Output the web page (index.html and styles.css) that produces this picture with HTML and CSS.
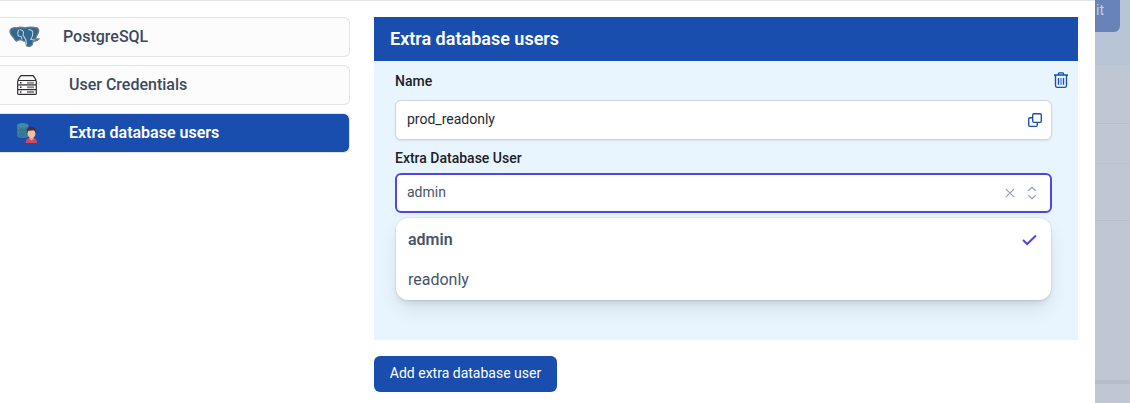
FILE: index.html
```html
<!DOCTYPE html>
<html lang="en">
<head>
<meta charset="utf-8">
<title>Extra database users</title>
<link rel="stylesheet" href="styles.css">
</head>
<body>
<div class="screen">
  <main class="drawer">
    <nav class="steps">
      <a class="step">
        <svg class="elephant" viewBox="0 0 32 22">
          <path d="M1 5C1 2 4 1 8 1.500C11 .5 14 .7 16 1.500C20 .5 24 .8 26 1C31 1 32 4 29 9L27 13L31 13Q29 16 25 15L24 19Q22 22 18 20L17 15Q15 16 13 14L10 14Q7 17 5 12Q1 8 1 5Z" fill="#306891" stroke="#777b7e" stroke-width="1.300"/>
          <path d="M10 3.500Q8 8 10 10Q14 10 13 13.500M11 3.500Q14 3 15 6L14.500 9L17.500 14L18 19M20 3.500Q24 3 24.500 6Q25 10 22.500 13.500L27 14" fill="none" stroke="#c3d0da" stroke-width="1.100"/>
        </svg>
        <span>PostgreSQL</span>
      </a>
      <a class="step nested">
        <svg class="small-icon" viewBox="0 0 20 20" fill="none" stroke="#302d30" stroke-width="1.2">
          <path d="M1 5L3 1.6Q3.5.7 5 .7H15Q16.500.7 17 1.6L19 5" fill="#f8f8f8"/>
          <rect x=".7" y="5.500" width="18.600" height="4.500" rx=".8" fill="#fff"/>
          <rect x=".7" y="10" width="18.600" height="4.700" rx=".8" fill="#fff"/>
          <rect x=".7" y="14.700" width="18.600" height="4.600" rx=".8" fill="#fff"/>
          <path d="M3 7.700H4.500M3 12.300H4.500M3 17H4.500" stroke-width="1.400"/>
          <path d="M10 7.700H17M10 12.300H17M10 17H17" stroke="#8f8c8f" stroke-width="2"/>
        </svg>
        <span>User Credentials</span>
      </a>
      <a class="step nested active">
        <svg class="small-icon" viewBox="0 0 20 20">
          <path d="M0 2.500V13Q1 15 6 15T11.500 13V2.500" fill="#347b9d"/>
          <ellipse cx="5.750" cy="2.500" rx="5.750" ry="2.500" fill="#4389a5"/>
          <path d="M0 6Q5 9 11.500 6M0 10.500Q5 13 11.500 10.500" fill="none" stroke="#2c7092" stroke-width=".7"/>
          <path d="M1 5.500H2M1 10H2" stroke="#7f9f6b" stroke-width=".8"/>
          <path d="M8.500 20Q9 15.500 12 15H16.500Q20 15.500 20 20Z" fill="#cf4961"/>
          <path d="M12.500 13H16.500V16L14.500 17.500L12.500 16Z" fill="#e1a68f"/>
          <ellipse cx="14.500" cy="10.500" rx="4" ry="4.700" fill="#f1bda5"/>
          <path d="M9.800 10Q8.600 4 14 3.500Q20 3.500 19.200 10H18.500Q18 7.500 16.500 7.200Q13 8 10.800 7.500L10.300 10Z" fill="#482f37"/>
        </svg>
        <span>Extra database users</span>
      </a>
    </nav>
    <section class="content">
      <div class="panel">
        <h2 class="panel-title">Extra database users</h2>
        <div class="panel-body">
          <div class="fields">
            <label class="label">Name</label>
            <div class="input">
              <span>prod_readonly</span>
              <svg class="copy" viewBox="0 0 16 16" fill="none" stroke="#194eae" stroke-width="1.350">
                <rect x="5.700" y="1.700" width="8.600" height="8.600" rx="1.200"/>
                <path d="M5 5.700H2.900Q1.700 5.700 1.700 6.900V13.100Q1.700 14.300 2.900 14.300H9.100Q10.300 14.300 10.300 13.100V11"/>
              </svg>
            </div>
            <label class="label second">Extra Database User</label>
            <div class="input select">
              <span>admin</span>
              <span class="select-icons">
                <svg width="10" height="10" viewBox="0 0 10 10"><path d="M.8.8L9.200 9.200M9.200.8L.8 9.200"/></svg>
                <svg width="10" height="14" viewBox="0 0 10 14"><path d="M1.300 4.700L5 1.300L8.700 4.700M1.300 9.300L5 12.700L8.700 9.300"/></svg>
              </span>
            </div>
            <div class="menu">
              <div class="option chosen"><span>admin</span>
                <svg width="15" height="12" viewBox="0 0 15 12" fill="none" stroke="#4f46e5" stroke-width="2"><path d="M1 6L5.200 10L14 1.500"/></svg>
              </div>
              <div class="option"><span>readonly</span></div>
            </div>
          </div>
          <svg class="trash" viewBox="0 0 14 16" fill="none" stroke="#194eae" stroke-width="1.350">
            <path d="M0 3H14M4 3L5 .8H9L10 3M1.500 3.500V13.500Q1.500 15.300 3 15.300H11Q12.500 15.300 12.500 13.500V3.500M4.500 6V12.700M9.500 6V12.700"/>
            <path d="M7 6V12.700" stroke="#7e9fd2" stroke-width="1.800"/>
          </svg>
        </div>
      </div>
      <button class="add">Add extra database user</button>
    </section>
  </main>
  <aside class="backdrop">
    <div class="band"><div class="edit">it</div></div>
    <div class="row r1"></div>
    <div class="row r2"></div>
    <div class="row r3"></div>
    <div class="row r4"></div>
  </aside>
</div>
</body>
</html>
```
FILE: styles.css
```css
* { box-sizing: border-box; }
body { margin: 0; font-family: Roboto, sans-serif; }
.screen { display: flex; width: 1130px; height: 403px; overflow: hidden; background: #bfc6d4; }
.drawer { display: flex; gap: 24px; width: 1095px; padding: 16px 17px 0 0; border-top: 1px solid #e2e4ea; background: #fff; }
.steps { display: flex; flex-direction: column; gap: 8px; width: 350px; }
.step {
  display: flex; align-items: center; gap: 23px; height: 40px; padding: 0 0 0 9px;
  border: 1px solid #e3e4e6; border-left: 0; border-radius: 0 6px 6px 0;
  background: #fcfcfc; color: #3d4a5c; font-size: 16px; line-height: 24px; font-weight: 500;
}
.nested { gap: 32px; padding-left: 17px; }
.active { background: #194eae; background-clip: padding-box; color: #fff; font-weight: 600; }
.elephant { width: 31px; height: 22px; }
.small-icon { width: 20px; height: 20px; }
.content { width: 704px; }
.panel { height: 323px; background: #e8f5fe; }
.panel-title { height: 44px; margin: 0; padding: 0 16px; background: #194eae; color: #fff; font-size: 18px; line-height: 43px; font-weight: 600; }
.panel-body { display: flex; padding: 10px 10px 0 21px; }
.fields { width: 657px; }
.label { display: block; color: #1c2027; font-size: 14px; line-height: 20px; font-weight: 500; }
.second { margin-top: 8px; }
.input {
  display: flex; align-items: center; justify-content: space-between; height: 40px; margin-top: 9px;
  padding: 0 8px 2px 11px; border: 1px solid #d1d5db; border-radius: 6px;
  background: #fff; color: #1f2937; font-size: 14px; box-shadow: 0 1px 2px rgb(0 0 0 / 8%);
}
.select { margin-top: 5px; padding: 0 12px 2px 10px; border: 2px solid #4f46e5; color: #475569; box-shadow: none; }
.copy { width: 16px; height: 16px; margin-top: 2px; }
.select-icons { display: flex; align-items: center; gap: 12px; padding-right: 1px; margin-top: 2px; }
.select-icons svg { fill: none; stroke: #94a3b8; stroke-width: 1.2; }
.menu { height: 82px; margin: 5px 1px 0; border-radius: 12px; background: #fff; box-shadow: 0 0 0 1px rgb(15 23 42 / 5%), 0 10px 20px -2px rgb(0 0 0 / 10%), 0 4px 6px -3px rgb(0 0 0 / 14%); }
.option { display: flex; align-items: center; justify-content: space-between; height: 40px; padding: 4px 14px 0 12px; color: #475569; font-size: 16px; line-height: 24px; }
.chosen { font-weight: 600; }
.trash { width: 14px; height: 16px; margin: 1px 0 0 2px; overflow: visible; }
.add { display: block; width: 183px; height: 36px; margin-top: 16px; padding: 0 0 2px; border: 0; border-radius: 6px; background: #194eae; color: #fff; font: 400 14px Roboto, sans-serif; }
.backdrop { width: 35px; }
.band { height: 65px; background: #b7c5d6; }
.edit { width: 25px; height: 32px; border-radius: 0 0 6px; background: #6783b9; color: #c6cfdf; font-size: 14px; line-height: 20px; padding-left: 1px; }
.row { border-bottom: 1px solid #b4bfcc; }
.r1 { height: 59px; }
.r2 { height: 40px; border-color: #bac3d0; }
.r3 { height: 57px; }
.r4 { height: 163px; border-bottom: 4px solid #b4becb; }
```
